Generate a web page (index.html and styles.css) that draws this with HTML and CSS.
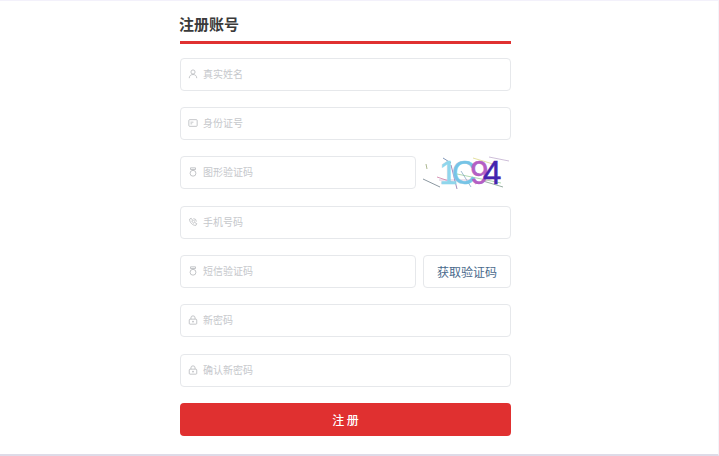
FILE: index.html
```html
<!DOCTYPE html>
<html lang="zh-CN">
<head>
<meta charset="utf-8">
<title>注册账号</title>
<link rel="stylesheet" href="styles.css">
</head>
<body>
<main class="page">
  <form class="form">
    <h1 class="title">注册账号</h1>
    <div class="field"><svg class="ico" viewBox="0 0 12 12"><circle cx="6" cy="3.600" r="2.500"/><path d="M1.500 11c0-2.800 2-4.400 4.500-4.400s4.500 1.600 4.500 4.400"/></svg><span class="ph">真实姓名</span></div>
    <div class="field"><svg class="ico" viewBox="0 0 12 12"><rect x="1" y="2" width="10" height="8" rx="1"/><path d="M3 5h3.500M3 7h2"/></svg><span class="ph">身份证号</span></div>
    <div class="row">
      <div class="field grow"><svg class="ico" viewBox="0 0 12 12"><path d="M3 1h6M3 3h6M3 1v2M9 1v2"/><circle cx="6" cy="7.500" r="3.500"/></svg><span class="ph">图形验证码</span></div>
      <svg class="captcha" viewBox="0 0 88 36">
        <g class="noise">
          <path stroke="#5a6b78" d="M0 24 L17 32"/><path stroke="#8a9a60" d="M3 9 L4 14"/><path stroke="#c9a9c9" d="M16 25 L50 25"/>
          <path stroke="#c96a9a" d="M14 22 L32 28"/><path stroke="#8fc98f" d="M34 19 L78 28"/><path stroke="#d8d27a" d="M50 3 L70 9"/>
          <path stroke="#b9a3c9" d="M66 2 L86 6"/><path stroke="#4a6a9a" d="M20 3 L28 8"/><path stroke="#6a8a7a" d="M60 26 L80 32"/>
          <path stroke="#7a5a9a" d="M28 10 L34 34"/><path stroke="#d8b0c0" d="M52 29 L74 22"/><path stroke="#7aa2c0" d="M38 16 L48 32"/>
        </g>
        <text class="digits" x="16" y="29"><tspan class="d1">1</tspan><tspan class="d2">C</tspan><tspan class="d3">9</tspan><tspan class="d4">4</tspan></text>
      </svg>
    </div>
    <div class="field"><svg class="ico" viewBox="0 0 12 12"><path d="M2 2.500 C1.500 6 5.500 10.500 9.500 10 L10.500 8 L8 6.500 L7 7.500 C6 7 5 6 4.500 4.800 L5.500 3.800 L3.800 1.500z"/><path d="M6.500 2a3.500 3.500 0 0 1 3.500 3.500M6.500 4a1.500 1.500 0 0 1 1.500 1.500"/></svg><span class="ph">手机号码</span></div>
    <div class="row">
      <div class="field grow"><svg class="ico" viewBox="0 0 12 12"><path d="M3 1h6M3 3h6M3 1v2M9 1v2"/><circle cx="6" cy="7.500" r="3.500"/></svg><span class="ph">短信验证码</span></div>
      <button class="code" type="button">获取验证码</button>
    </div>
    <div class="field"><svg class="ico" viewBox="0 0 12 12"><rect x="1.500" y="5" width="9" height="6" rx="1"/><path d="M3.500 5V3.500a2.500 2.500 0 0 1 5 0V5M5.500 7.500h1v1h-1z"/></svg><span class="ph">新密码</span></div>
    <div class="field"><svg class="ico" viewBox="0 0 12 12"><rect x="1.500" y="5" width="9" height="6" rx="1"/><path d="M3.500 5V3.500a2.500 2.500 0 0 1 5 0V5M5.500 7.500h1v1h-1z"/></svg><span class="ph">确认新密码</span></div>
    <button class="submit" type="button">注 册</button>
  </form>
</main>
</body>
</html>
```
FILE: styles.css
```css
* { box-sizing: border-box; }
html, body { margin: 0; height: 100%; background: #fff; }
body { font-family: "Noto Sans CJK SC", "Liberation Sans", sans-serif; overflow: hidden; }
.page {
  height: 456px;
  border-top: 1px solid #f3f1fb;
  border-bottom: 2px solid #dedbe8;
  border-right: 1px solid #f4f3f9;
  display: flex;
  justify-content: flex-start;
  padding-left: 180px;
}
.form { width: 331px; display: flex; flex-direction: column; gap: 16.3px; }
.title {
  margin: 0 0 -2.500px;
  height: 43px;
  padding-top: 12px;
  font-size: 15px;
  line-height: 22px;
  font-weight: 700;
  color: #3a3a3a;
  text-indent: -1px;
  border-bottom: 3px solid #e03131;
}
.field {
  height: 33px;
  display: flex;
  align-items: center;
  gap: 5px;
  padding-left: 7px;
  padding-bottom: 1px;
  background: #fff;
  border: 1px solid #e6e8eb;
  border-radius: 4px;
}
.grow { flex: 1; }
.ico {
  width: 10px;
  height: 10px;
  fill: none;
  stroke: #b8babe;
  stroke-width: 1;
  flex: none;
}
.ph { font-size: 10px; line-height: 14px; color: #c6c8cc; }
.row { display: flex; gap: 7px; height: 33px; }
.captcha { width: 88px; height: 36px; flex: none; margin-top: -1px; }
.noise path { fill: none; stroke-width: 0.7; }
.digits { font-family: "Liberation Sans", sans-serif; font-size: 33px; letter-spacing: -5.500px; stroke-width: 0.5px; }
.d1 { fill: #8fd6ec; stroke: #8fd6ec; }
.d2 { fill: #76c4e6; stroke: #76c4e6; }
.d3 { fill: #b45fc4; stroke: #b45fc4; }
.d4 { fill: #4424ae; stroke: #4424ae; }
.code {
  width: 88px;
  height: 33px;
  padding: 0;
  background: #fff;
  border: 1px solid #e6e8eb;
  border-radius: 4px;
  font-family: inherit;
  font-size: 12px;
  color: #4a6a8c;
}
.submit {
  height: 33px;
  padding: 0;
  background: #e03030;
  border: 0;
  border-radius: 4px;
  font-family: inherit;
  font-size: 12px;
  font-weight: 500;
  color: #fff;
}
```
